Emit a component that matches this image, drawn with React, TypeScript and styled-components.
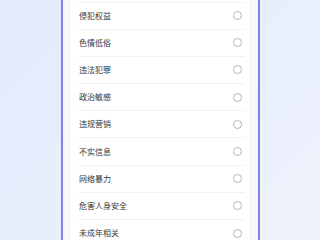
import React from "react";
import styled, { createGlobalStyle } from "styled-components";

const Global = createGlobalStyle`
  html, body { margin: 0; padding: 0; }
  body {
    width: 320px; height: 240px; overflow: hidden;
    font-family: "Noto Sans CJK SC", "Noto Sans", sans-serif;
  }
`;

const Page = styled.div`
  width: 320px;
  height: 240px;
  overflow: hidden;
  background: linear-gradient(135deg, #e3ebfc 0%, #e9effc 60%, #eef3fc 100%);
  display: flex;
  padding-left: 61px;
  box-sizing: border-box;
`;

const Phone = styled.div`
  width: 178px;
  height: 240px;
  border-left: 2px solid #8083e4;
  border-right: 2px solid #8083e4;
  background: #f7f7f9;
  padding: 0 9px 0 8px;
  box-sizing: content-box;
  overflow: hidden;
`;

const Card = styled.div`
  background: #ffffff;
  height: 100%;
  padding: 1.5px 4px 0 8px;
`;

const Row = styled.div`
  height: 27.2px;
  box-sizing: border-box;
  border-top: 1px solid #f1f1f3;
  display: flex;
  align-items: center;
  justify-content: space-between;
  padding-right: 3px;
`;

const Label = styled.span`
  font-size: 8px;
  color: #363636;
  line-height: 1;
`;

const Radio = styled.span`
  width: 9px;
  height: 9px;
  border: 1px solid #b5b5b8;
  border-radius: 50%;
  box-sizing: border-box;
`;

const items = [
  "侵犯权益",
  "色情低俗",
  "违法犯罪",
  "政治敏感",
  "违规营销",
  "不实信息",
  "网络暴力",
  "危害人身安全",
  "未成年相关",
];

export default function App() {
  return (
    <>
      <Global />
      <Page>
        <Phone>
          <Card>
            {items.map((t) => (
              <Row key={t}>
                <Label>{t}</Label>
                <Radio />
              </Row>
            ))}
          </Card>
        </Phone>
      </Page>
    </>
  );
}
